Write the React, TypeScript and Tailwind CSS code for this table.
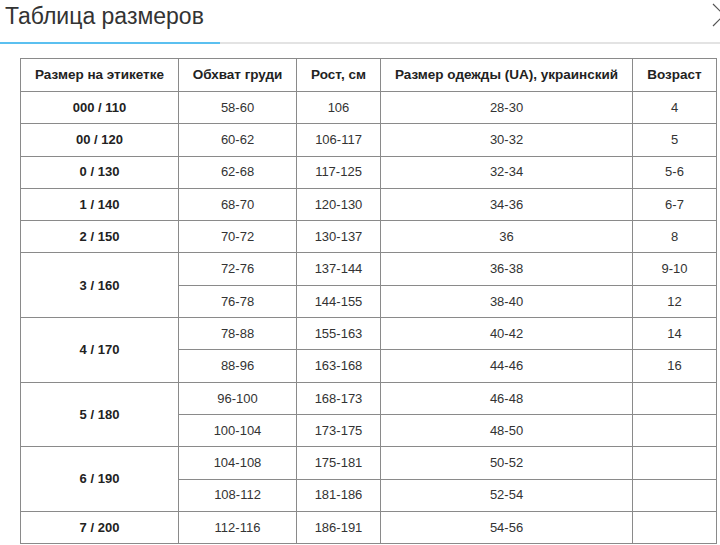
import React from "react";

type Row = { label?: string; span?: number; chest: string; height: string; ua: string; age: string };

const rows: Row[] = [
  { label: "000 / 110", chest: "58-60", height: "106", ua: "28-30", age: "4" },
  { label: "00 / 120", chest: "60-62", height: "106-117", ua: "30-32", age: "5" },
  { label: "0 / 130", chest: "62-68", height: "117-125", ua: "32-34", age: "5-6" },
  { label: "1 / 140", chest: "68-70", height: "120-130", ua: "34-36", age: "6-7" },
  { label: "2 / 150", chest: "70-72", height: "130-137", ua: "36", age: "8" },
  { label: "3 / 160", span: 2, chest: "72-76", height: "137-144", ua: "36-38", age: "9-10" },
  { chest: "76-78", height: "144-155", ua: "38-40", age: "12" },
  { label: "4 / 170", span: 2, chest: "78-88", height: "155-163", ua: "40-42", age: "14" },
  { chest: "88-96", height: "163-168", ua: "44-46", age: "16" },
  { label: "5 / 180", span: 2, chest: "96-100", height: "168-173", ua: "46-48", age: "" },
  { chest: "100-104", height: "173-175", ua: "48-50", age: "" },
  { label: "6 / 190", span: 2, chest: "104-108", height: "175-181", ua: "50-52", age: "" },
  { chest: "108-112", height: "181-186", ua: "52-54", age: "" },
  { label: "7 / 200", chest: "112-116", height: "186-191", ua: "54-56", age: "" },
];

const cell = "border border-[#8a8a8a] text-center align-middle p-0";

export default function App() {
  return (
    <div className="relative h-[545px] w-[720px] overflow-hidden bg-white font-['Liberation_Sans',Arial,sans-serif] text-[#333]">
      {/* header */}
      <div className="h-[42px] pl-[5px] pt-[2px] text-[23px] leading-[28px] text-[#333]">Таблица размеров</div>
      <div className="flex h-[2px]">
        <div className="w-[220px] bg-[#5bc0f0]" />
        <div className="flex-1 bg-[#e3e3e3]" />
      </div>
      <svg className="absolute left-[712px] top-[3px]" width="24" height="24" viewBox="0 0 24 24" fill="none" stroke="#555" strokeWidth="1.2">
        <path d="M1 1 L23 23 M23 1 L1 23" />
      </svg>

      {/* table */}
      <table className="ml-[20px] mt-[14px] w-[696px] table-fixed border-collapse text-[13px]">
        <colgroup>
          <col className="w-[158px]" />
          <col className="w-[118px]" />
          <col className="w-[84px]" />
          <col className="w-[252px]" />
          <col className="w-[84px]" />
        </colgroup>
        <thead>
          <tr className="h-[33px] text-[13.5px] font-bold text-[#222]">
            <th className={cell}>Размер на этикетке</th>
            <th className={cell}>Обхват груди</th>
            <th className={cell}>Рост, см</th>
            <th className={cell}>Размер одежды (UA), украинский</th>
            <th className={cell}>Возраст</th>
          </tr>
        </thead>
        <tbody>
          {rows.map((r, i) => (
            <tr key={i} className="h-[32.3px]">
              {r.label && (
                <td className={`${cell} font-bold text-[#222]`} rowSpan={r.span || 1}>
                  {r.label}
                </td>
              )}
              <td className={cell}>{r.chest}</td>
              <td className={cell}>{r.height}</td>
              <td className={cell}>{r.ua}</td>
              <td className={cell}>{r.age}</td>
            </tr>
          ))}
        </tbody>
      </table>
    </div>
  );
}
